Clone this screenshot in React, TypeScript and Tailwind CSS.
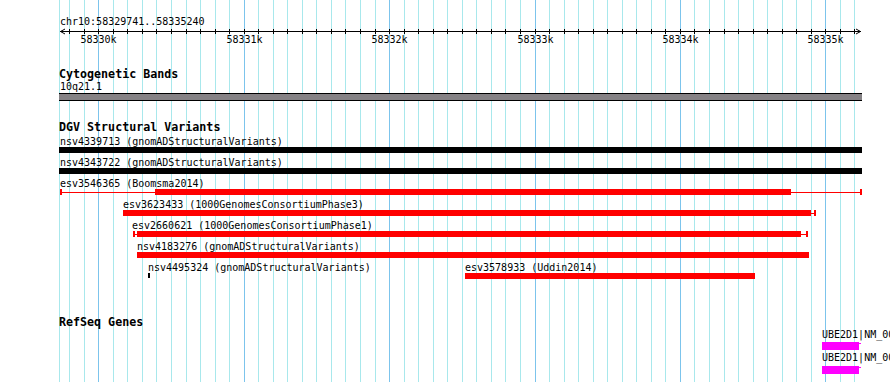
import React from "react";

type Feature = {
  label: string;
  labelX: number;
  start: number;
  end: number;
  thickStart?: number;
  thickEnd?: number;
  color: string;
  barH?: number;
};

// gridline every 100bp, 58330k sits at k=0
const gx = (k: number) => Math.round(98.3 + k * 14.54);
const GRID = Array.from({ length: 55 }, (_, i) => i - 2);
const MAJOR = [0, 10, 20, 30, 40, 50];

const ROWS: Feature[][] = [
  [{ label: "nsv4339713 (gnomADStructuralVariants)", labelX: 60, start: 59, end: 862, color: "#000000" }],
  [{ label: "nsv4343722 (gnomADStructuralVariants)", labelX: 60, start: 59, end: 862, color: "#000000" }],
  [{ label: "esv3546365 (Boomsma2014)", labelX: 60, start: 60, end: 862, thickStart: 155, thickEnd: 791, color: "#ff0000" }],
  [{ label: "esv3623433 (1000GenomesConsortiumPhase3)", labelX: 123, start: 123, end: 816, thickStart: 123, thickEnd: 811, color: "#ff0000" }],
  [{ label: "esv2660621 (1000GenomesConsortiumPhase1)", labelX: 132, start: 133, end: 808, thickStart: 137, thickEnd: 801, color: "#ff0000" }],
  [{ label: "nsv4183276 (gnomADStructuralVariants)", labelX: 137, start: 137, end: 809, color: "#ff0000" }],
  [
    { label: "nsv4495324 (gnomADStructuralVariants)", labelX: 148, start: 148, end: 150, color: "#000000", barH: 5 },
    { label: "esv3578933 (Uddin2014)", labelX: 465, start: 465, end: 755, color: "#ff0000" },
  ],
];

function Bar({ f }: { f: Feature }) {
  const h = f.barH ?? 6;
  const ts = f.thickStart ?? f.start;
  const te = f.thickEnd ?? f.end;
  const hasThin = ts > f.start || te < f.end;
  return (
    <>
      <span className="absolute top-0 leading-[11px] whitespace-nowrap" style={{ left: f.labelX }}>
        {f.label}
      </span>
      {hasThin && (
        <>
          <div className="absolute top-[14px] h-px" style={{ left: f.start, width: f.end - f.start, background: f.color }} />
          <div className="absolute top-[11px] w-[2px]" style={{ left: f.start, height: h, background: f.color }} />
          <div className="absolute top-[11px] w-[2px]" style={{ left: f.end - 2, height: h, background: f.color }} />
        </>
      )}
      <div className="absolute top-[11px]" style={{ left: ts, width: te - ts, height: h, background: f.color }} />
    </>
  );
}

export default function App() {
  return (
    <div className="relative w-[890px] h-[382px] overflow-hidden bg-white text-black text-[10px] font-['DejaVu_Sans_Mono','Liberation_Mono',monospace]">
      {/* grid */}
      <div className="absolute inset-0">
        <div className="absolute top-0 bottom-0 left-[59px] w-px bg-[#a8e8ec]" />
        {GRID.map((k) => (
          <div
            key={k}
            className={`absolute top-0 bottom-0 w-px ${k % 10 === 0 ? "bg-[#7cc4ec]" : "bg-[#a8e8ec]"}`}
            style={{ left: gx(k) }}
          />
        ))}
      </div>

      <div className="relative pt-[16px]">
        <div className="pl-[60px] leading-[12px]">chr10:58329741..58335240</div>

        {/* ruler */}
        <div className="relative h-[18px]">
          <svg width={890} height={18} className="absolute left-0 top-0" shapeRendering="crispEdges">
            <line x1={60} y1={3.5} x2={861} y2={3.5} stroke="#000" />
            {GRID.map((k) => (
              <line key={k} x1={gx(k) + 0.5} y1={1} x2={gx(k) + 0.5} y2={6} stroke="#000" />
            ))}
            <polyline points="65,1 60.5,3.5 65,6" fill="none" stroke="#000" shapeRendering="auto" />
            <polyline points="856,1 860.5,3.5 856,6" fill="none" stroke="#000" shapeRendering="auto" />
          </svg>
          {MAJOR.map((k, i) => (
            <span key={k} className="absolute top-[6px] leading-[12px] w-[36px] text-center" style={{ left: gx(k) - 17.5 }}>
              {58330 + i}k
            </span>
          ))}
        </div>

        {/* Cytogenetic Bands */}
        <div className="mt-[22px] pl-[59px] font-bold text-[11.67px] leading-[13px]">Cytogenetic Bands</div>
        <div className="pl-[60px] leading-[11px]">10q21.1</div>
        <div className="mt-[1px] ml-[59px] w-[803px] h-[8px] border-y border-black bg-[#858285]" />

        {/* DGV */}
        <div className="mt-[20px] pl-[59px] font-bold text-[11.67px] leading-[13px]">DGV Structural Variants</div>
        <div className="mt-[2px]">
          {ROWS.map((row, i) => (
            <div key={i} className="relative h-[21px]">
              {row.map((f) => (
                <Bar key={f.label} f={f} />
              ))}
            </div>
          ))}
        </div>

        {/* RefSeq */}
        <div className="mt-[33px] pl-[59px] font-bold text-[11.67px] leading-[13px]">RefSeq Genes</div>
        <div className="pl-[822px] leading-[11px] whitespace-nowrap">UBE2D1|NM_003338</div>
        <div className="mt-[2px] ml-[822px] flex items-start">
          <div className="w-[37px] h-[8px] bg-[#ff00ff]" />
          <div className="mt-[1px] w-[2px] h-px bg-[#ff00ff]" />
        </div>
        <div className="mt-[2px] pl-[822px] leading-[11px] whitespace-nowrap">UBE2D1|NM_001204880</div>
        <div className="mt-[3px] ml-[822px] flex items-start">
          <div className="w-[37px] h-[8px] bg-[#ff00ff]" />
          <div className="mt-[1px] w-[2px] h-px bg-[#ff00ff]" />
        </div>
      </div>
    </div>
  );
}
